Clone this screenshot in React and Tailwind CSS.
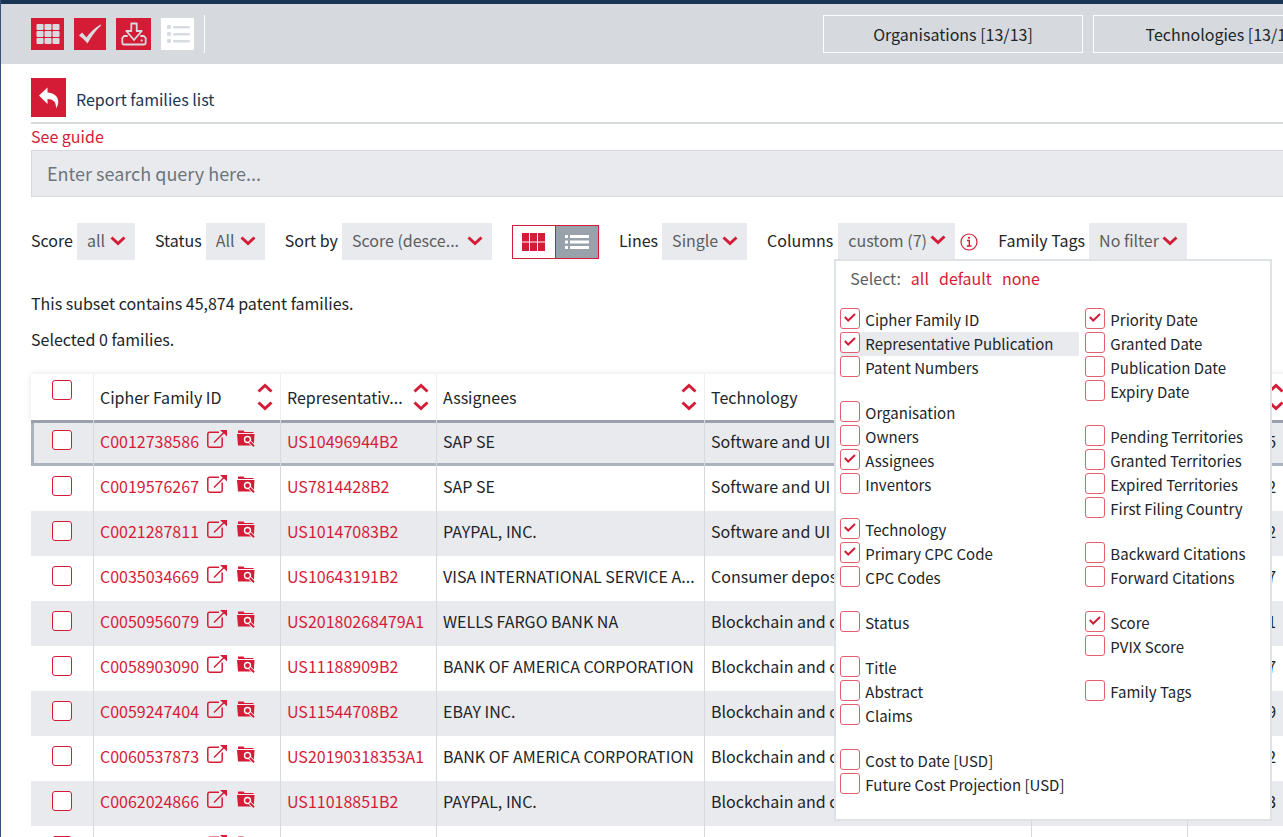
import { useState } from 'react';

const BOX = "appearance-none shrink-0 w-5 h-5 rounded-[3px] border border-[#d51c37] bg-white";

const leftColumns = [
  ['Cipher Family ID', 'Representative Publication', 'Patent Numbers'],
  ['Organisation', 'Owners', 'Assignees', 'Inventors'],
  ['Technology', 'Primary CPC Code', 'CPC Codes'],
  ['Status'],
  ['Title', 'Abstract', 'Claims'],
  ['Cost to Date [USD]', 'Future Cost Projection [USD]'],
];

const rightColumns = [
  ['Priority Date', 'Granted Date', 'Publication Date', 'Expiry Date'],
  ['Pending Territories', 'Granted Territories', 'Expired Territories', 'First Filing Country'],
  ['Backward Citations', 'Forward Citations'],
  ['Score', 'PVIX Score'],
  ['Family Tags'],
];

const defaultColumns = [
  'Cipher Family ID', 'Representative Publication', 'Assignees', 'Technology',
  'Primary CPC Code', 'Priority Date', 'Score',
];

const families = [
  { id: 'C0012738586', pub: 'US10496944B2', assignee: 'SAP SE', tech: 'Software and UI', cpc: 'G06Q 10/06', date: '2013-10-25' },
  { id: 'C0019576267', pub: 'US7814428B2', assignee: 'SAP SE', tech: 'Software and UI', cpc: 'G06F 3/048', date: '2006-10-12' },
  { id: 'C0021287811', pub: 'US10147083B2', assignee: 'PAYPAL, INC.', tech: 'Software and UI', cpc: 'G06Q 20/32', date: '2000-02-22' },
  { id: 'C0035034669', pub: 'US10643191B2', assignee: 'VISA INTERNATIONAL SERVICE ASSOCIATION', tech: 'Consumer deposits', cpc: 'G06Q 20/10', date: '2012-01-27' },
  { id: 'C0050956079', pub: 'US20180268479A1', assignee: 'WELLS FARGO BANK NA', tech: 'Blockchain and crypto', cpc: 'G06Q 40/04', date: '2017-03-21' },
  { id: 'C0058903090', pub: 'US11188909B2', assignee: 'BANK OF AMERICA CORPORATION', tech: 'Blockchain and crypto', cpc: 'G06Q 20/38', date: '2017-12-07' },
  { id: 'C0059247404', pub: 'US11544708B2', assignee: 'EBAY INC.', tech: 'Blockchain and crypto', cpc: 'G06Q 20/40', date: '2017-12-29' },
  { id: 'C0060537873', pub: 'US20190318353A1', assignee: 'BANK OF AMERICA CORPORATION', tech: 'Blockchain and crypto', cpc: 'G06Q 20/36', date: '2018-04-12' },
  { id: 'C0062024866', pub: 'US11018851B2', assignee: 'PAYPAL, INC.', tech: 'Blockchain and crypto', cpc: 'H04L 9/06', date: '2018-06-13' },
  { id: 'C0062711530', pub: 'US11109234B2', assignee: 'PAYPAL, INC.', tech: 'Blockchain and crypto', cpc: 'H04L 9/32', date: '2018-08-17' },
];

const shorten = (text, max) => (text.length > max ? text.slice(0, max) + '...' : text);

function Chevron({ up, className }) {
  return (
    <svg viewBox="0 0 16 10" className={className || "w-4 h-[10px]"} fill="none" stroke="#d51c37" strokeWidth="3">
      <path d={up ? "M1.5 8.5L8 2.5l6.500 6" : "M1.500 1.500L8 7.500l6.500-6"} />
    </svg>
  );
}

function GridIcon() {
  return (
    <svg viewBox="0 0 24 20" className="w-6 h-5" fill="#d8dbe0">
      {[0, 8, 16].map((x) => [0, 7, 14].map((y) => (
        <rect key={`${x}-${y}`} x={x + 0.5} y={y} width="7" height="6" rx="1" />
      )))}
    </svg>
  );
}

function CheckIcon() {
  return (
    <svg viewBox="0 0 24 20" className="w-6 h-5" fill="#d8dbe0">
      <path d="M1 11.500L4 8.500Q6.500 11 8.500 13.500Q14 5.500 22.500 0.500L23.300 1.300Q15.500 8.500 9.500 19.500Q6 15 1 11.500Z" />
    </svg>
  );
}

function DownloadIcon() {
  return (
    <svg viewBox="0 0 26 24" className="w-[26px] h-6" fill="none" stroke="#d8dbe0" strokeWidth="1.800" strokeLinejoin="round" strokeLinecap="round">
      <path d="M10.300 1.500h5.400v7.500h5L13 18 5.300 9h5z" />
      <path d="M6 14H3L1.300 16v5q0 1.500 1.500 1.500h20.400q1.500 0 1.500-1.500v-5L23 14h-3" />
      <path d="M20.500 18.500h.4" />
    </svg>
  );
}

function ListIcon() {
  return (
    <svg viewBox="0 0 24 20" className="w-6 h-5" fill="#d8dbe0">
      {[1, 8, 15].map((y) => (
        <g key={y}>
          <rect x="1" y={y} width="4" height="4" rx="1" />
          <rect x="7" y={y + 1} width="17" height="2.500" rx="1" />
        </g>
      ))}
    </svg>
  );
}

function BackIcon() {
  return (
    <svg viewBox="0 0 20 22" className="w-5 h-[22px]" fill="#fff">
      <path d="M0 8.500L8.500 0.500v5C16 5.500 23 12 17 21.500C17.500 15.500 14.500 12 8.500 12v5z" />
    </svg>
  );
}

function ExternalIcon() {
  return (
    <svg viewBox="0 0 20 18" className="w-5 h-[18px]" fill="none" stroke="#d51c37" strokeWidth="1.500">
      <path d="M12 2.300H2.500Q.8 2.300 .8 4v11.500q0 1.700 1.700 1.700h11q1.700 0 1.700-1.700V7.500" />
      <path d="M7 12.500L17 2.500" />
      <path d="M13 0h7v6.500l-2-2-1-1-2-1.500z" fill="#d51c37" stroke="none" />
    </svg>
  );
}

function FolderIcon() {
  return (
    <svg viewBox="0 0 18 17" className="w-[18px] h-[17px]">
      <path d="M1 .5h5.500l1 1.500H16.500v1H1z" fill="#d51c37" />
      <path d="M0 4h17.500l-.7 11.500H1z" fill="#d51c37" />
      <circle cx="10.500" cy="9.500" r="3" fill="none" stroke="#fff" strokeWidth="1.400" />
      <path d="M12.300 11.500l4.700 4.700" stroke="#fff" strokeWidth="3.500" />
      <path d="M12.800 12l4.200 4.200" stroke="#d51c37" strokeWidth="2" />
    </svg>
  );
}

function Filter({ id, label, value, width }) {
  return (
    <div className="flex items-center gap-1">
      <label htmlFor={id} className="pb-[3px]">{label}</label>
      <div className="relative">
        <select id={id} className={`${width} h-[37px] appearance-none bg-[#e9eaee] pb-[3px] pl-[10px] pr-6 text-[#5c5e61]`}>
          <option>{value}</option>
        </select>
        <Chevron className="pointer-events-none absolute right-[9px] top-[13px] w-4 h-[10px]" />
      </div>
    </div>
  );
}

function ColumnList({ groups, selected, onToggle }) {
  return (
    <div className="flex flex-col gap-[21px]">
      {groups.map((group) => (
        <div key={group[0]}>
          {group.map((name) => (
            <label
              key={name}
              className={`flex h-6 gap-[5px] text-[15px] leading-6 ${name === 'Representative Publication' ? 'bg-[#e9eaee]' : ''}`}
            >
              <span className="relative flex h-[21px] w-5 shrink-0">
                <input
                  type="checkbox"
                  checked={selected.includes(name)}
                  onChange={() => onToggle(name)}
                  className="h-[21px] w-5 appearance-none rounded-[3px] border border-[#e2606f] bg-white"
                />
                {selected.includes(name) && (
                  <svg viewBox="0 0 12 9" className="pointer-events-none absolute left-1 top-[5px] h-[9px] w-3" fill="none" stroke="#d51c37" strokeWidth="2">
                    <path d="M.8 4l3.400 3.500L11 1" />
                  </svg>
                )}
              </span>
              {name}
            </label>
          ))}
        </div>
      ))}
    </div>
  );
}

function HeaderCell({ children }) {
  return (
    <th className="border-l border-[#eceef0] bg-white pl-[6px] pr-[7px] text-left font-normal">
      <div className="flex items-center justify-between">
        <span className="whitespace-nowrap">{children}</span>
        <button aria-label={`Sort by ${children}`} className="flex shrink-0 flex-col gap-2">
          <Chevron up />
          <Chevron />
        </button>
      </div>
    </th>
  );
}

const CELL = "overflow-hidden whitespace-nowrap border-l border-[#d6d9de] pb-[5px] pl-[6px]";

export default function App() {
  const [selected, setSelected] = useState(defaultColumns);
  const [query, setQuery] = useState('');

  const toggleColumn = (name) => {
    setSelected(selected.includes(name) ? selected.filter((c) => c !== name) : [...selected, name]);
  };

  const allColumns = [...leftColumns, ...rightColumns].flat();

  return (
    <div className="h-screen overflow-hidden border-l border-[#35527a] bg-white font-['Noto_Sans_CJK_SC','Source_Sans_Pro',sans-serif] text-base leading-6 text-[#212529]">
      <header className="flex h-16 items-center overflow-hidden border-t-4 border-[#1b3654] bg-[#d6d9de] pl-[30px]">
        <div className="flex h-[38px] items-center gap-[10px] border-r border-white pr-[10px]">
          <button aria-label="Grid view" className="flex h-8 w-[33px] items-center justify-center bg-[#d51c37]"><GridIcon /></button>
          <button aria-label="Select" className="flex h-8 w-8 items-center justify-center bg-[#d51c37]"><CheckIcon /></button>
          <button aria-label="Download" className="flex h-8 w-[35px] items-center justify-center bg-[#d51c37]"><DownloadIcon /></button>
          <button aria-label="List view" className="flex h-8 w-[33px] items-center justify-center bg-white"><ListIcon /></button>
        </div>
        <div className="-mr-[70px] ml-auto flex shrink-0 gap-[10px]">
          <button className="h-[38px] w-[260px] border border-white">Organisations [13/13]</button>
          <button className="h-[38px] w-[260px] border border-white">Technologies [13/13]</button>
        </div>
      </header>

      <main className="pl-[30px] pt-[14px]">
        <div className="flex items-center gap-[10px] border-b-2 border-[#d6d9de] pb-[5px]">
          <button aria-label="Back" className="flex h-[39px] w-[35px] items-center justify-center bg-[#d51c37]"><BackIcon /></button>
          <h1 className="pt-0.5 text-[#1b3654]">Report families list</h1>
        </div>
        <a href="#guide" className="block h-[26px] text-[#d51c37]">See guide</a>
        <input
          type="text"
          aria-label="Search query"
          value={query}
          onChange={(e) => setQuery(e.target.value)}
          placeholder="Enter search query here..."
          className="block h-[47px] w-full border border-r-0 border-[#d6d9de] bg-[#e9eaee] px-[15px] pb-0.5 text-lg placeholder:text-[#6c757d]"
        />

        <div className="mt-[26px] flex items-center gap-5 whitespace-nowrap">
          <Filter id="score" label="Score" value="all" width="w-[58px]" />
          <Filter id="status" label="Status" value="All" width="w-[59px]" />
          <Filter id="sort" label="Sort by" value={shorten('Score (descending)', 12)} width="w-[150px]" />
          <div className="flex h-[34px] border border-[#d51c37]">
            <button aria-label="Cards" className="flex w-[43px] items-center justify-center border-r border-[#d51c37]">
              <svg viewBox="0 0 23 18" className="w-[23px] h-[18px]" fill="#d51c37">
                {[0, 8, 16].map((x) => [0, 9.5].map((y) => (
                  <rect key={`${x}-${y}`} x={x} y={y} width="7" height="8.500" />
                )))}
              </svg>
            </button>
            <button aria-label="Table" className="flex w-[42px] items-center justify-center bg-[#99a1aa]">
              <svg viewBox="0 0 24 14" className="w-6 h-[14px]" fill="#fff">
                {[0, 5.5, 11].map((y) => (
                  <g key={y}>
                    <rect y={y} width="3" height="3" />
                    <rect x="5" y={y} width="19" height="3" />
                  </g>
                ))}
              </svg>
            </button>
          </div>
          <Filter id="lines" label="Lines" value="Single" width="w-[85px]" />
          <div className="flex items-center gap-[5px]">
            <span className="pb-[3px]">Columns</span>
            <div className="relative">
              <button className="flex h-[37px] w-[117px] items-center justify-between bg-[#e9eaee] pb-[3px] pl-[10px] pr-[9px] text-[#5c5e61]">
                custom ({selected.length})
                <Chevron />
              </button>
              <div className="absolute -left-1 top-[36px] z-10 h-[562px] w-[438px] border-2 border-[#dfe2e5] bg-white pl-1 pt-[5px]">
                <div className="flex gap-[10px] pl-[10px] text-[#5c5e61]">
                  Select:
                  <button className="text-[#d51c37]" onClick={() => setSelected(allColumns)}>all</button>
                  <button className="text-[#d51c37]" onClick={() => setSelected(defaultColumns)}>default</button>
                  <button className="text-[#d51c37]" onClick={() => setSelected([])}>none</button>
                </div>
                <div className="grid grid-cols-[239px_1fr] gap-[6px] pt-[18px]">
                  <ColumnList groups={leftColumns} selected={selected} onToggle={toggleColumn} />
                  <ColumnList groups={rightColumns} selected={selected} onToggle={toggleColumn} />
                </div>
              </div>
            </div>
            <svg viewBox="0 0 18 18" className="h-[18px] w-[18px]" fill="none" stroke="#d51c37">
              <circle cx="9" cy="9" r="8" strokeWidth="1.200" />
              <path d="M7 7.500h2.300v5.500M6.800 13h4.800" strokeWidth="1.400" />
              <circle cx="9" cy="4.800" r="1.100" fill="#d51c37" stroke="none" />
            </svg>
          </div>
          <Filter id="tags" label="Family Tags" value="No filter" width="w-[98px]" />
        </div>

        <p className="mt-[31px]">This subset contains 45,874 patent families.</p>
        <p className="mt-3">Selected 0 families.</p>

        <table className="mt-[23px] w-[1260px] table-fixed border-separate border-spacing-0">
          <colgroup>
            <col className="w-[62px]" />
            <col className="w-[187px]" />
            <col className="w-[156px]" />
            <col className="w-[268px]" />
            <col className="w-[327px]" />
            <col className="w-[156px]" />
            <col className="w-[104px]" />
          </colgroup>
          <thead className="shadow-[0_0_6px_rgba(0,0,0,0.12)]">
            <tr className="h-[46px]">
              <th className="bg-white pb-[14px] align-middle">
                <input type="checkbox" aria-label="Select all families" className={`${BOX} block mx-auto`} />
              </th>
              <HeaderCell>Cipher Family ID</HeaderCell>
              <HeaderCell>{shorten('Representative Publication', 13)}</HeaderCell>
              <HeaderCell>Assignees</HeaderCell>
              <HeaderCell>Technology</HeaderCell>
              <HeaderCell>Primary CPC Code</HeaderCell>
              <HeaderCell>{shorten('Priority Date', 8)}</HeaderCell>
            </tr>
          </thead>
          <tbody>
            {families.map((f, i) => (
              <tr
                key={f.id}
                className={
                  i === 0
                    ? 'h-[46px] bg-[#e9eaee] shadow-[inset_0_3px_0_#99a1aa,inset_3px_-3px_0_#aab2bd]'
                    : 'h-[45px] odd:bg-[#e9eaee]'
                }
              >
                <td className="pb-[6px] align-middle">
                  <input type="checkbox" aria-label={`Select ${f.id}`} className={`${BOX} block mx-auto`} />
                </td>
                <td className={CELL}>
                  <div className="flex items-center gap-2">
                    <a href={`#${f.id}`} className="text-[#d51c37]">{f.id}</a>
                    <div className="flex items-center gap-[10px] pb-1">
                      <a href={`#open-${f.id}`} aria-label="Open family"><ExternalIcon /></a>
                      <a href={`#find-${f.id}`} aria-label="Find similar"><FolderIcon /></a>
                    </div>
                  </div>
                </td>
                <td className={CELL}><a href={`#${f.pub}`} className="text-[#d51c37]">{f.pub}</a></td>
                <td className={CELL}>{shorten(f.assignee, 28)}</td>
                <td className={CELL}>{f.tech}</td>
                <td className={CELL}>{f.cpc}</td>
                <td className={CELL}>{f.date}</td>
              </tr>
            ))}
          </tbody>
        </table>
      </main>
    </div>
  );
}
